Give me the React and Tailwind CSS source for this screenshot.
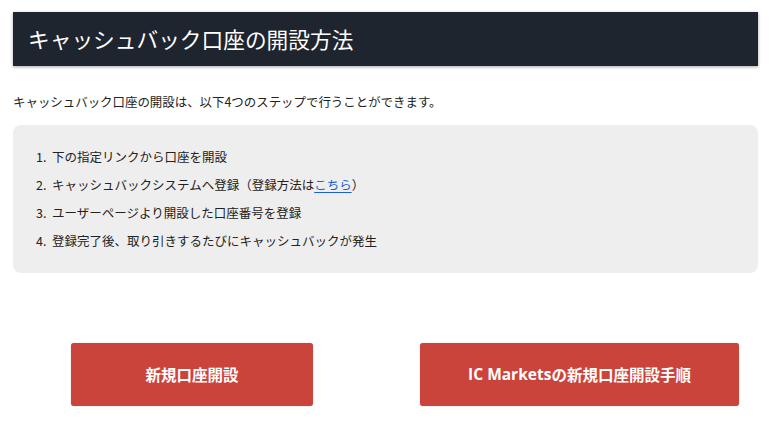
export default function App() {
  const steps = [
    <>下の指定リンクから口座を開設</>,
    <>
      キャッシュバックシステムへ登録（登録方法は
      <a href="#" className="text-[#1a5fd6] underline underline-offset-2">こちら</a>）
    </>,
    <>ユーザーページより開設した口座番号を登録</>,
    <>登録完了後、取り引きするたびにキャッシュバックが発生</>,
  ];

  return (
    <div className="min-h-screen bg-white px-[13px] pt-[12px] text-[#222] font-['Noto_Sans_CJK_JP','Noto_Sans',sans-serif]">
      {/* Title bar */}
      <div className="flex h-[54px] w-[745px] items-center bg-[#1f252f] pl-[15px] shadow-[0_1px_3px_rgba(0,0,0,0.35)]">
        <h2 className="text-[21.7px] font-normal leading-none text-white">キャッシュバック口座の開設方法</h2>
      </div>

      <p className="mt-[26px] text-[12.45px] leading-[20px]">
        キャッシュバック口座の開設は、以下4つのステップで行うことができます。
      </p>

      {/* Steps */}
      <div className="mt-[13px] w-[745px] rounded-[8px] bg-[#eeeeee] py-[18px] pl-[23px]">
        <ol>
          {steps.map((s, i) => (
            <li key={i} className="text-[12.5px] leading-[28px]">
              <span className="inline-block w-[16px]">{i + 1}.</span>
              {s}
            </li>
          ))}
        </ol>
      </div>

      {/* Buttons */}
      <div className="mt-[70px] flex pl-[58px]">
        <a
          href="#"
          className="flex h-[63px] w-[242px] items-center justify-center rounded-[3px] bg-[#cb443c] text-[15.5px] font-bold text-white shadow-[0_0_1px_rgba(0,0,0,0.4)]"
        >
          新規口座開設
        </a>
        <a
          href="#"
          className="ml-[107px] flex h-[63px] w-[319px] items-center justify-center rounded-[3px] bg-[#cb443c] text-[15.5px] font-bold text-white shadow-[0_0_1px_rgba(0,0,0,0.4)]"
        >
          <span className="font-['Open_Sans',sans-serif]">IC Markets</span>の新規口座開設手順
        </a>
      </div>
    </div>
  );
}
